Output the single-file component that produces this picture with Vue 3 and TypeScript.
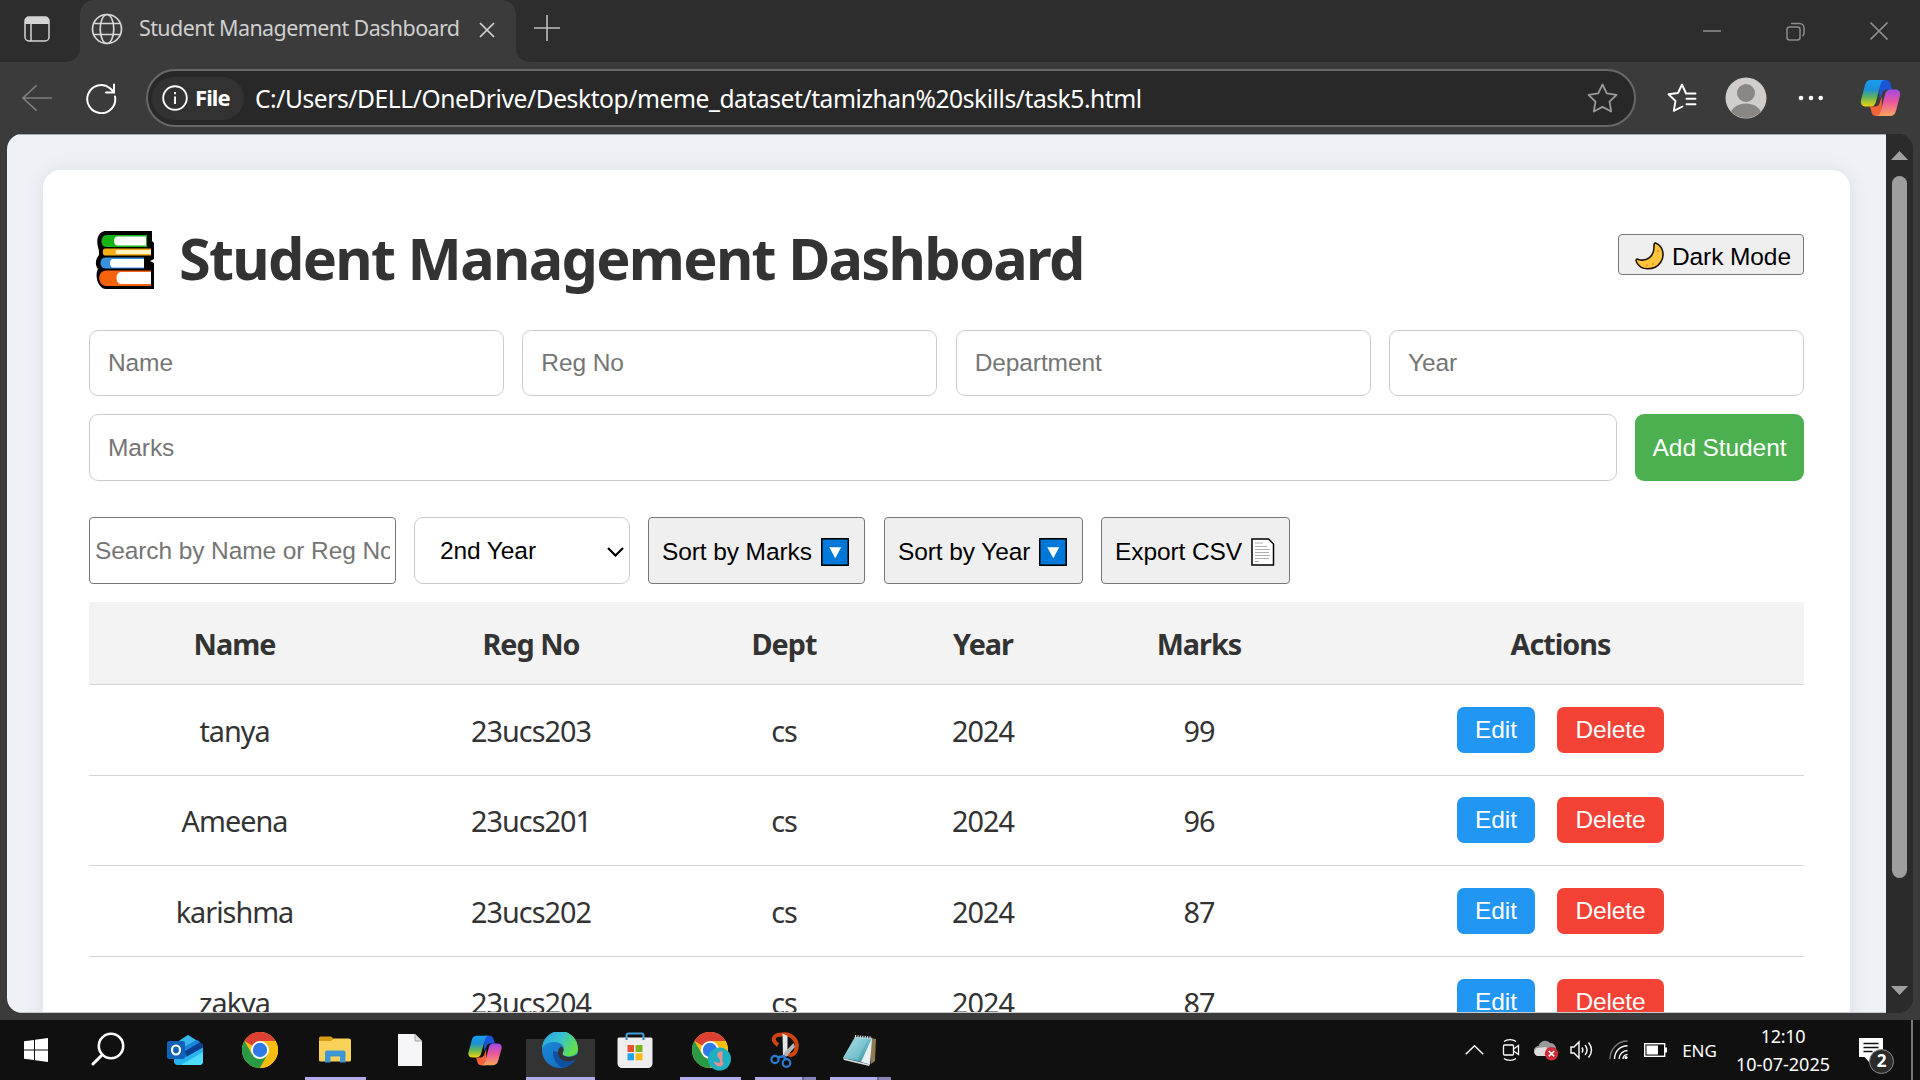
<script setup lang="ts">
import { ref } from 'vue'

interface Student {
  name: string
  reg: string
  dept: string
  year: number
  marks: number
}

const address = 'C:/Users/DELL/OneDrive/Desktop/meme_dataset/tamizhan%20skills/task5.html'
const columns: string[] = ['Name', 'Reg No', 'Dept', 'Year', 'Marks', 'Actions']
const students = ref<Student[]>([
  { name: 'tanya', reg: '23ucs203', dept: 'cs', year: 2024, marks: 99 },
  { name: 'Ameena', reg: '23ucs201', dept: 'cs', year: 2024, marks: 96 },
  { name: 'karishma', reg: '23ucs202', dept: 'cs', year: 2024, marks: 87 },
  { name: 'zakya', reg: '23ucs204', dept: 'cs', year: 2024, marks: 87 },
])
const yearFilter = ref('2')
</script>

<template>
  <div class="screen">
    <svg class="defs" aria-hidden="true">
      <defs>
        <linearGradient id="cp-a" x1="0" y1="0" x2="0" y2="1">
          <stop offset="0" stop-color="#1b9df0" /><stop offset=".35" stop-color="#1a8fd8" /><stop offset=".65" stop-color="#5fb45a" /><stop offset="1" stop-color="#f0d40e" />
        </linearGradient>
        <linearGradient id="cp-b" x1="0" y1="0" x2="0" y2="1">
          <stop offset="0" stop-color="#a04ae8" /><stop offset=".45" stop-color="#e8569c" /><stop offset="1" stop-color="#fba35c" />
        </linearGradient>
        <linearGradient id="edge-a" x1="0" y1="0" x2="1" y2=".5">
          <stop offset="0" stop-color="#2a9fe0" /><stop offset=".5" stop-color="#35bfd3" /><stop offset="1" stop-color="#62e04e" />
        </linearGradient>
        <linearGradient id="edge-b" x1="0" y1="0" x2="1" y2="1">
          <stop offset="0" stop-color="#1f90de" /><stop offset="1" stop-color="#0c63b8" />
        </linearGradient>
        <linearGradient id="note-a" x1="0" y1="0" x2="1" y2="1">
          <stop offset="0" stop-color="#c9ecf1" /><stop offset=".6" stop-color="#5fb3c2" /><stop offset="1" stop-color="#2c7f92" />
        </linearGradient>
        <symbol id="copilot" viewBox="0 0 40 38">
          <path d="M19 1h6.500c2.500 0 3.800 1.500 4.600 4l1.500 5.500h-5c-3 0-4.500 2-5.200 4.500L19 20z" fill="#1c56d8" />
          <path d="M21 37h-5.500c-2.500 0-3.800-1.500-4.500-4L9.500 27.500h5c3 0 4.400-2 5-4.500L21.500 17z" fill="#f4623a" />
          <path d="M10.500 1H25c-3 0-4.300 2-5 4.500l-4.500 17c-.8 3-2.300 5-5.500 5H5.500C1.500 27.500-.3 25 .6 21L4.500 6C5.400 2.800 7.200 1 10.500 1z" fill="url(#cp-a)" />
          <path d="M29.500 37H15c3 0 4.500-2 5.200-4.500l4.300-17c.8-3 2.300-5 5.500-5h4.500c4 0 5.800 2.500 4.900 6.500L35.500 32c-.9 3.200-2.700 5-6 5z" fill="url(#cp-b)" />
        </symbol>
        <symbol id="chrome" viewBox="0 0 36 36">
          <circle cx="18" cy="18" r="18" fill="#f9bd12" />
          <path d="M18 18 2.400 9A18 18 0 0 1 33.600 9H18z" fill="#dc4033" />
          <path d="M2.400 9A18 18 0 0 0 18 36l7.800-13.500L18 18l-7.800 4.500z" fill="#2b9a47" />
          <path d="M18 9h15.600A18 18 0 0 1 18 36l7.800-13.500z" fill="#f9bd12" />
          <circle cx="18" cy="18" r="9" fill="#fff" /><circle cx="18" cy="18" r="7.200" fill="#2f7ae6" />
        </symbol>
        <symbol id="down-box" viewBox="0 0 27 27">
          <rect x=".75" y=".75" width="25.500" height="25.500" fill="#0078d7" stroke="#000" stroke-width="1.500" />
          <path d="M8 9h11.500l-5.750 10.500z" fill="#fff" />
        </symbol>
      </defs>
    </svg>

    <div class="tabstrip">
      <div class="tab-menu">
        <svg width="26" height="26" viewBox="0 0 26 26"><rect x="1" y="1" width="24" height="24" rx="4" fill="none" stroke="#d4d4d4" stroke-width="1.500" /><path d="M1 8V5a4 4 0 0 1 4-4h16a4 4 0 0 1 4 4v3z" fill="#d4d4d4" /><path d="M7 8v17" stroke="#d4d4d4" stroke-width="1.500" /></svg>
      </div>
      <div class="tab">
        <svg width="32" height="32" viewBox="0 0 32 32" fill="none" stroke="#d8d8d8" stroke-width="1.700"><circle cx="16" cy="16" r="14.500" /><ellipse cx="16" cy="16" rx="6.800" ry="14.500" /><path d="M3 10.500h26M3 21.500h26" /></svg>
        <span class="tab-title">Student Management Dashboard</span>
        <svg class="tab-close" width="16" height="16" viewBox="0 0 16 16" stroke="#d4d4d4" stroke-width="1.700"><path d="M1 1l14 14M15 1 1 15" /></svg>
      </div>
      <svg class="new-tab" width="26" height="26" viewBox="0 0 26 26" stroke="#bcbcbc" stroke-width="1.600"><path d="M13 0v26M0 13h26" /></svg>
      <div class="win-controls">
        <svg width="18" height="18" viewBox="0 0 18 18" stroke="#8c8c8c" stroke-width="1.600"><path d="M0 9h18" /></svg>
        <svg width="19" height="19" viewBox="0 0 19 19" fill="none" stroke="#8c8c8c" stroke-width="1.500"><rect x="1" y="5" width="13" height="13" rx="2.500" /><path d="M5 1.500h8.500a4.500 4.500 0 0 1 4.500 4.500v5.500a3 3 0 0 1-1.500 2.500" /></svg>
        <svg width="18" height="18" viewBox="0 0 18 18" stroke="#8c8c8c" stroke-width="1.600"><path d="M.5.5l17 17M17.500.5l-17 17" /></svg>
      </div>
    </div>

    <div class="toolbar">
      <svg class="back" width="30" height="26" viewBox="0 0 30 26" fill="none" stroke="#7f7f7f" stroke-width="1.700"><path d="M30 13H1M14.500 .500 1 13l13.500 12.500" /></svg>
      <svg class="reload" width="31" height="31" viewBox="0 0 31 31" fill="none" stroke="#fff" stroke-width="2" stroke-linecap="round"><path d="M29 13.500a14 14 0 1 1-5-8.300l3.500 3.300M28 1.500v8h-8" /></svg>
      <div class="address">
        <div class="scheme">
          <svg width="26" height="26" viewBox="0 0 26 26" fill="none" stroke="#fff" stroke-width="1.900"><circle cx="13" cy="13" r="11.800" /><path d="M13 11.500v7.500M13 7v2.300" /></svg>
          <span>File</span>
        </div>
        <span class="path">{{ address }}</span>
        <svg class="star" width="31" height="30" viewBox="0 0 31 30" fill="none" stroke="#9a9a9a" stroke-width="1.800" stroke-linejoin="round"><path d="M15.500 1.500l4.300 8.900 9.700 1.400-7 6.900 1.700 9.800-8.700-4.600-8.700 4.600 1.700-9.800-7-6.900 9.700-1.400z" /></svg>
      </div>
      <svg class="favs" width="30" height="30" viewBox="0 0 30 30" fill="none" stroke="#fff" stroke-width="1.900" stroke-linejoin="round" stroke-linecap="round"><path d="M28.500 10.500H19l-4-9-4 8.500-9.500 1.300 7 6.700-1.700 9.800 8.700-4.300M19.500 15.800h9M19.500 21.300h9" /></svg>
      <svg class="avatar" width="42" height="42" viewBox="0 0 42 42"><defs><clipPath id="av"><circle cx="21" cy="21" r="20" /></clipPath></defs><circle cx="21" cy="21" r="20.500" fill="#d0cdca" /><g clip-path="url(#av)" fill="#8a8683"><circle cx="21" cy="16" r="9" /><ellipse cx="21" cy="39" rx="16" ry="12.500" /></g></svg>
      <svg class="dots" width="26" height="6" viewBox="0 0 26 6" fill="#fff"><circle cx="3" cy="3" r="2.300" /><circle cx="13" cy="3" r="2.300" /><circle cx="22.700" cy="3" r="2.300" /></svg>
      <svg class="pilot" width="41" height="38"><use href="#copilot" /></svg>
    </div>

    <div class="viewport">
      <main class="page">
        <section class="card">
          <header class="head">
            <svg class="books" width="60" height="60" viewBox="0 0 60 60">
              <path d="M10 1h47v10l2 2v16l-4 2 4 2v26H11C4 59-1 47 3 39c-3-4-3-9 1-14 0-3 0-5-1-8C1 10 3 2 10 1z" fill="#000" />
              <path d="M11 5h41v12H11C5 17 5 6 11 5z" fill="#16b516" /><path d="M22 6.500h29v9H22c-4 0-4-9 0-9z" fill="#fff" />
              <path d="M10 18.500h46v7H10c-3 0-3-7 0-7z" fill="#f5ae13" /><path d="M22 20h34v4H22c-2 0-2-4 0-4z" fill="#fff3c4" />
              <path d="M10 27.500h39v11H10c-6 0-6-11 0-11z" fill="#3a92dc" /><path d="M18 29h31v8.500H18c-4 0-4-8.500 0-8.500z" fill="#fff" />
              <path d="M11 40.500h45V56H11c-9 0-9-15.500 0-15.500z" fill="#f7630c" /><path d="M26 42h30v12H26c-6 0-6-12 0-12z" fill="#fff" />
            </svg>
            <h1>Student Management Dashboard</h1>
            <button class="plain mode">
              <svg width="29" height="28" viewBox="0 0 29 28"><path d="M20.500 1c8 3 9.500 13 5 19.500-6 8.500-20 8.500-24-.5-1-2.500 0-3.500 2-2.500 8 2.500 16-3 15.500-13.500 0-2 .5-3.300 1.500-3z" fill="#fcc53b" stroke="#1b1308" stroke-width="1.600" /><circle cx="23" cy="9" r="1.300" fill="#f0a02a" /><circle cx="12" cy="23.500" r="1.300" fill="#f0a02a" /><circle cx="18" cy="22" r="1.200" fill="#f0a02a" /></svg>
              <span>Dark Mode</span>
            </button>
          </header>

          <form class="entry" @submit.prevent>
            <div class="row four">
              <input placeholder="Name" /><input placeholder="Reg No" /><input placeholder="Department" /><input placeholder="Year" />
            </div>
            <div class="row second">
              <input placeholder="Marks" /><button class="add">Add Student</button>
            </div>
          </form>

          <div class="filters">
            <input class="search" placeholder="Search by Name or Reg No" />
            <div class="select">
              <select v-model="yearFilter"><option value="2">2nd Year</option></select>
              <svg width="17" height="10" viewBox="0 0 17 10" fill="none" stroke="#000" stroke-width="2.200"><path d="M1 1l7.500 7.500L16 1" /></svg>
            </div>
            <button class="plain sort-marks"><span>Sort by Marks</span><svg width="28" height="28"><use href="#down-box" /></svg></button>
            <button class="plain sort-year"><span>Sort by Year</span><svg width="28" height="28"><use href="#down-box" /></svg></button>
            <button class="plain export"><span>Export CSV</span>
              <svg width="24" height="28" viewBox="0 0 24 28"><path d="M1 1h16.500L22.500 6v21H1z" fill="#fff" stroke="#000" stroke-width="1.500" /><path d="M4 5h8M4 8.500h12M4 11.500h15M4 14.500h14M4 17.500h15M4 20.500h14M4 23.500h4" stroke="#b0b0b0" stroke-width="1" /></svg>
            </button>
          </div>

          <div class="table">
            <div class="tr th"><span v-for="c in columns" :key="c">{{ c }}</span></div>
            <div v-for="s in students" :key="s.reg" class="tr">
              <span>{{ s.name }}</span><span>{{ s.reg }}</span><span>{{ s.dept }}</span><span>{{ s.year }}</span><span>{{ s.marks }}</span>
              <div class="actions"><button class="edit">Edit</button><button class="delete">Delete</button></div>
            </div>
          </div>
        </section>
      </main>
      <div class="scrollbar">
        <svg width="17" height="9" viewBox="0 0 17 9" fill="#a0a0a0"><path d="M8.500 0 17 9H0z" /></svg>
        <div class="thumb"></div>
        <svg class="down" width="17" height="9" viewBox="0 0 17 9" fill="#a0a0a0"><path d="M8.500 9 17 0H0z" /></svg>
      </div>
    </div>

    <footer class="taskbar">
      <div class="app start"><svg width="24" height="24" viewBox="0 0 24 24" fill="#fff"><path d="M0 3.300 10 2v9.500H0zM11 1.800 24 0v11.500H11zM0 12.500h10V22L0 20.700zM11 12.500h13V24L11 22.200z" /></svg></div>
      <div class="app"><svg class="left" width="34" height="34" viewBox="0 0 34 34" fill="none" stroke="#fff" stroke-linecap="round"><circle cx="20" cy="14" r="12.200" stroke-width="2.600" /><path d="M11 23 2 32" stroke-width="3" /></svg></div>
      <div class="app">
        <svg width="36" height="31" viewBox="0 0 36 31"><path d="M7 9 21 0l15 9.500V26a4 4 0 0 1-4 4H11a4 4 0 0 1-4-4z" fill="#1272c4" /><path d="M12 6l9-6 9 5.700L17 14z" fill="#38b6ee" /><path d="M16 13 30 5l6 4.500v4L20 22z" fill="#0b3f8f" /><path d="M16 13 30 5l3 2.300L18 16z" fill="#1a86dd" /><path d="M7 22l12 0L36 12.500V26a4 4 0 0 1-4 4H11a4 4 0 0 1-4-4z" fill="#27b4ec" /><path d="M14 30l22-13v9a4 4 0 0 1-4 4z" fill="#4fdcfb" /><rect y="6" width="18" height="18" rx="2" fill="#0f62b8" /><ellipse cx="9" cy="15" rx="4" ry="4.500" fill="none" stroke="#fff" stroke-width="2.200" /></svg>
      </div>
      <div class="app"><svg width="36" height="36"><use href="#chrome" /></svg></div>
      <div class="app on">
        <svg width="32" height="28" viewBox="0 0 32 28"><path d="M0 2a1.500 1.500 0 0 1 1.500-1.500H12L15 3v4H0z" fill="#d79a14" /><path d="M0 5h12l3-2.500h15A2 2 0 0 1 32 4.500V24a1.500 1.500 0 0 1-1.500 1.500h-29A1.500 1.500 0 0 1 0 24z" fill="#fad25a" /><path d="M6 26.500V16.500a2 2 0 0 1 2-2h16.500a2 2 0 0 1 2 2v10h-5.500v-6H11.500v6z" fill="#3e96d4" /></svg>
      </div>
      <div class="app"><svg width="24" height="32" viewBox="0 0 24 32"><path d="M0 0h17l7 7v25H0z" fill="#f6f6f8" /><path d="M17 0v7h7z" fill="#dcdcdc" stroke="#999" stroke-width=".8" /></svg></div>
      <div class="app"><svg width="34" height="31" viewBox="0 0 40 38" preserveAspectRatio="none"><use href="#copilot" width="40" height="38" /></svg></div>
      <div class="app on active">
        <svg width="36" height="36" viewBox="0 0 36 36"><circle cx="18" cy="18" r="18" fill="url(#edge-b)" /><path d="M11 19c0 8 3 14 10 16.700C27 35 32 31 34 27c-8 4-16 1-18-7z" fill="#1150a0" /><path d="M0 17A18 18 0 0 1 36 17c0 1.500-.3 3-1 4.200-2.500 3-8 4-12 2.500-2.300-.8-2.800-1.800-2-3.200C24 14 18.500 10 12 10 6 10 1.500 13 0 17z" fill="url(#edge-a)" /><path d="M19 14.500c3 1.500 3 4 1.500 6.500-1 4 9 6 15.500 1v5h-2C26 32 16 29 16 20c0-2.500 1.500-4.500 3-5.500z" fill="#333" /></svg>
      </div>
      <div class="app"><svg width="36" height="36" viewBox="0 0 36 36"><path d="M9.500 9V3.500A2 2 0 0 1 11.500 1.500h13a2 2 0 0 1 2 2V9" fill="none" stroke="#3ea1dc" stroke-width="2" /><path d="M.5 7A1.500 1.500 0 0 1 2 5.500h32A1.500 1.500 0 0 1 35.500 7v24.500a4.500 4.500 0 0 1-4.500 4.500H5a4.500 4.500 0 0 1-4.500-4.500z" fill="#eeeeee" /><path d="M9.500 5.500V8M26.500 5.500V8" stroke="#2a83bd" stroke-width="2" /><path d="M10.500 13H17v7h-6.500z" fill="#e8502a" /><path d="M18.500 13h7v7h-7z" fill="#7eb51a" /><path d="M10.500 21.300H17v7h-6.500z" fill="#20a2e8" /><path d="M18.500 21.300h7v7h-7z" fill="#fab915" /></svg></div>
      <div class="app on">
        <svg class="profile" width="40" height="40" viewBox="0 0 40 40"><svg width="36" height="36"><use href="#chrome" /></svg><circle cx="27.500" cy="27" r="11.500" fill="#1fb0bf" /><path d="M30.500 20.500c-3-1-5 1-4 3.500 1 2.500 3.500 3 2.500 6-.6 2-3 2.500-5 1.500 2 3 6 2.500 6.500-1" fill="#e88f94" stroke="#e88f94" stroke-width="2" /></svg>
      </div>
      <div class="app on multi">
        <svg width="30" height="36" viewBox="0 0 30 36"><path d="M8 13C1 8 3 2.500 12 2.500 22 1 29 9 26 18c-1.500 5-6 6.500-9 3" fill="none" stroke="#d1440f" stroke-width="4" /><path d="M12.500 1.500 17.500 4v20l-4.500 0z" fill="#e4e4e4" /><path d="M23.500 11 14 21l2 4 9-10z" fill="#b5b5b5" /><circle cx="5" cy="27.500" r="3.600" fill="none" stroke="#2b7cd0" stroke-width="2.200" /><circle cx="16.500" cy="31" r="3.800" fill="none" stroke="#2b7cd0" stroke-width="2.200" /><path d="M8 25.500l6-1.500 1.500 3.500" fill="none" stroke="#2b7cd0" stroke-width="2.500" /></svg>
      </div>
      <div class="app on multi">
        <svg width="34" height="32" viewBox="0 0 34 32"><path d="M28 4l5 1-1 22-4 3z" fill="#8f7a4d" /><path d="M12 3l17 1-2 26-27-6z" fill="url(#note-a)" /><path d="M29 4 27 30.500 18 28z" fill="#e9eef0" /><path d="M12 3 0 24l15 1L25 4z" fill="#8fd0da" opacity=".45" /><path d="M12 2.500 29 4" stroke="#ddd" stroke-width="3" stroke-dasharray="1.200 1.200" /><path d="M0 24l27 6.500-1 1.500L1 26z" fill="#d8dcdc" /></svg>
      </div>

      <div class="tray">
        <div style="width: 36px"><svg width="19" height="10" viewBox="0 0 19 10" fill="none" stroke="#fff" stroke-width="1.500"><path d="M.7 9.300 9.500.8l8.800 8.500" /></svg></div>
        <div style="width: 37px"><svg width="18" height="24" viewBox="0 0 18 24" fill="none" stroke="#fff" stroke-width="1.300"><rect x="1.500" y="7" width="10" height="10" rx="1" /><path d="M11.500 11 16.500 7.500v9L11.500 13M2 3.500C5 1 11 1 14 3.500M2 20.500c3 2.500 9 2.500 12 0" /></svg></div>
        <div style="width: 35px"><svg width="25" height="22" viewBox="0 0 25 22"><path d="M5 17a5 5 0 0 1-.5-10C6 2 12 0 16 4c4 0 6 3 6 6l-3 7z" fill="#9a9a9a" /><path d="M4.500 17C0 17-1 11 3 9l9-1 5 9z" fill="#dedede" /><circle cx="17.500" cy="14.700" r="6.700" fill="#d32a35" /><path d="M14.800 12l5.400 5.400M20.200 12l-5.400 5.400" stroke="#fff" stroke-width="1.600" /></svg></div>
        <div style="width: 36px"><svg width="24" height="20" viewBox="0 0 24 20" fill="none" stroke="#fff" stroke-width="1.400"><path d="M1 7h3l5-5v16l-5-5H1zM12 7.500c1 1.500 1 3.500 0 5M15 5c2.500 3 2.500 7 0 10M18.500 2.500c4 4.500 4 10.500 0 15" /></svg></div>
        <div style="width: 38px"><svg width="20" height="20" viewBox="0 0 20 20" fill="none" stroke="#fff" stroke-width="1.400"><path d="M1 19C1 9 9 1 18.500 1" stroke="#777" /><path d="M5.500 19C5.500 11.500 11 5.800 18.500 5.800M10 19c0-4.500 4-8.500 8.500-8.500M14 19c0-2.500 2-4.500 4.500-4.500" /><circle cx="17" cy="17.500" r="1.600" fill="#fff" stroke="none" /></svg></div>
        <div style="width: 34px"><svg width="23" height="14" viewBox="0 0 23 14"><rect x=".7" y=".7" width="20" height="12.600" fill="none" stroke="#fff" stroke-width="1.400" /><path d="M2.500 2.500H14v9H2.500zM21 4.500h2v5h-2z" fill="#fff" /></svg></div>
        <div class="lang">ENG</div>
        <div class="clock"><span>12:10</span><span>10-07-2025</span></div>
        <div class="notice">
          <svg width="24" height="25" viewBox="0 0 24 25"><path d="M0 0h24v19H15l-5 5-4.500-5H0z" fill="#fff" /><path d="M4.500 5.500h15M4.500 9.500h15M4.500 13.500h9" stroke="#111" stroke-width="1.300" /></svg>
          <span class="badge">2</span>
        </div>
      </div>
    </footer>
  </div>
</template>

<style>
html, body { margin: 0; background: #101010; }
</style>

<style scoped>
.screen {
  width: 1920px; height: 1080px; overflow: hidden; display: flex; flex-direction: column;
  background: #3b3b3b; font-family: "Noto Sans", "Open Sans", sans-serif; color: #333; box-sizing: border-box;
}
.screen * { box-sizing: border-box; }
.screen svg { display: block; flex: none; }
.screen .defs { position: absolute; width: 0; height: 0; }
input, button, select { font-family: "Liberation Sans", Arial, sans-serif; font-size: 24.5px; letter-spacing: -0.1px; margin: 0; outline: none; }

.tabstrip { height: 62px; flex: none; display: flex; background: #3b3b3b; }
.tab-menu { width: 80px; background: #2d2d2d; border-bottom-right-radius: 14px; padding: 16px 0 0 24px; }
.tab { width: 436px; background: #3b3b3b; position: relative; display: flex; align-items: flex-start; padding: 13px 0 0 11px; }
.tab::before, .tab::after { content: ""; position: absolute; top: 0; width: 14px; height: 14px; }
.tab::before { left: 0; background: radial-gradient(circle at 100% 100%, transparent 13.5px, #2d2d2d 14px); }
.tab::after { right: 0; background: radial-gradient(circle at 0 100%, transparent 13.5px, #2d2d2d 14px); }
.tab-title { width: 340px; margin-left: 16px; font-size: 21.5px; line-height: 30px; letter-spacing: -0.6px; color: #cfcfcf; white-space: nowrap; }
.tab-close { margin-top: 9px; }
.new-tab { background: #2d2d2d; }
.tabstrip > .new-tab { box-sizing: content-box; padding: 15px 18px 21px 18px; border-bottom-left-radius: 14px; }
.win-controls { flex: 1; display: flex; justify-content: flex-end; gap: 65px; padding: 22px 32px 0 0; background: #2d2d2d; }

.toolbar { height: 72px; flex: none; display: flex; align-items: center; padding-left: 22px; }
.reload { margin-left: 34px; }
.address { width: 1490px; height: 58px; margin-left: 29px; border: 2px solid #676767; border-radius: 29px; background: #282828; display: flex; align-items: center; padding-left: 4px; }
.scheme { width: 92px; height: 43px; border-radius: 22px; background: #323232; display: flex; align-items: center; padding-left: 10px; gap: 7px; font-weight: 700; font-size: 22px; letter-spacing: -0.9px; color: #fff; }
.scheme span { position: relative; top: -1px; }
.path { width: 1344px; margin-left: 11px; font-size: 24.6px; letter-spacing: -0.44px; color: #fff; white-space: nowrap; flex: none; }
.address .star { margin-left: -12px; }
.favs { margin-left: 31px; }
.avatar { margin-left: 28px; }
.dots { margin-left: 31px; }
.pilot { margin-left: 36px; }

.viewport { height: 879px; flex: none; margin: 0 7px; display: flex; border-radius: 15px; overflow: hidden; background: #2b2b2b; }
.page { width: 1879px; height: 879px; padding: 35px 36px 0; overflow: hidden; background: #eef2f7; border-top: 1px solid #a9abae; border-bottom: 1px solid #c9c9c9; }
.card { height: 1100px; border-radius: 18px; background: #fff; padding: 46px; box-shadow: 0 0 20px rgba(0, 0, 0, 0.08); }
.head { height: 114px; display: flex; align-items: flex-start; }
.books { margin: 14px 0 0 6px; }
h1 { margin: 2px auto 0 24px; font-size: 57.6px; line-height: 80px; font-weight: 700; letter-spacing: -1.72px; white-space: nowrap; color: #333; }
.plain { background: #efefef; border: 1.500px solid #767676; border-radius: 4px; color: #000; display: flex; align-items: center; padding: 0; white-space: nowrap; }
.mode { width: 186px; height: 41px; margin-top: 18px; padding-left: 16px; }
.mode span { margin-left: 8px; position: relative; top: 2px; }
.mode svg { margin-top: 3px; }

.entry { display: flex; flex-direction: column; gap: 18px; }
.row { display: flex; gap: 18.4px; }
.row input { flex: 1; min-width: 0; height: 66px; padding: 0 18px; border: 1px solid #ccc; border-radius: 9px; background: #fff; }
input::placeholder { color: #757575; opacity: 1; }
.row.second input { height: 67px; }
.add { width: 169px; height: 67px; border: 0; border-radius: 9px; background: #4caf50; color: #fff; padding: 0; }

.filters { display: flex; margin: 36px 0 18px; height: 67px; gap: 18px; }
.search { width: 307px; border: 1.500px solid #767676; border-radius: 4px; padding: 0 5px; background: #fff; }
.select { width: 216px; position: relative; border: 1px solid #ccc; border-radius: 9px; display: flex; align-items: center; }
.select select { appearance: none; border: 0; background: transparent; width: 100%; height: 100%; padding: 0 0 0 25px; color: #000; }
.select svg { position: absolute; right: 5px; top: 29px; }
.filters .plain { padding: 3px 0 0 13px; }
.filters .plain span { width: 159px; text-align: left; }
.sort-marks { width: 217px; }
.filters .sort-year { width: 199px; margin-left: 1px; }
.filters .sort-year span { width: 141px; }
.export { width: 189px; }
.filters .export span { width: 136px; }

.tr { display: grid; grid-template-columns: 291px 302px 204px 194px 238px 485px; align-items: center; justify-items: center; height: 90.67px; border-bottom: 1px solid #d5d5d5; font-size: 28.8px; letter-spacing: -1px; line-height: 40px; }
.th { height: 83px; background: #f3f3f3; font-weight: 700; }
.tr > span { position: relative; top: 1px; }
.actions { display: flex; gap: 22px; }
.actions button { height: 46px; border: 0; border-radius: 7px; padding: 0; color: #fff; }
.edit { width: 78px; background: #2196f3; }
.delete { width: 107px; background: #f44336; }

.scrollbar { width: 27px; display: flex; flex-direction: column; align-items: center; padding-top: 17px; background: #2b2b2b; }
.thumb { width: 15px; height: 702px; margin-top: 16px; border-radius: 8px; background: #9e9e9e; }
.down { margin-top: 108px; }

.taskbar { height: 60px; margin-top: 7px; flex: none; display: flex; background: #101010; color: #fff; }
.app { width: 75px; height: 60px; display: flex; align-items: center; justify-content: center; position: relative; }
.start { width: 72.500px; }
.app .left { margin-right: 5px; margin-bottom: 2px; }
.app .profile { margin-left: 3px; margin-top: 4px; }
.on::after { content: ""; position: absolute; bottom: 0; left: 7px; width: 61px; height: 3px; background: #b3abea; }
.active::after { left: 3px; width: 69px; }
.active::before { content: ""; position: absolute; bottom: 0; left: 3px; width: 69px; height: 41px; background: #333; }
.active svg { position: relative; }
.multi::after { background: linear-gradient(90deg, #b3abea 47px, #6b668f 47px, #6b668f 48.500px, #8a85b4 48.500px); }
.tray { margin-left: auto; display: flex; align-items: center; padding-right: 6px; margin-right: 7px; border-right: 2px solid #777; height: 60px; }
.tray > div { display: flex; align-items: center; justify-content: center; }
.lang { width: 55px; font-size: 17px; }
.clock { width: 112px; flex-direction: column; font-size: 18px; line-height: 28px; }
.clock span:first-child { letter-spacing: -0.3px; }
.notice { width: 66px; height: 60px; position: relative; right: 1px; }
.badge { position: absolute; left: 31px; top: 29px; width: 25px; height: 25px; border-radius: 50%; background: #2b2b2b; border: 1px solid #8a8a8a; font-size: 17px; font-weight: 700; line-height: 22px; text-align: center; }
</style>
